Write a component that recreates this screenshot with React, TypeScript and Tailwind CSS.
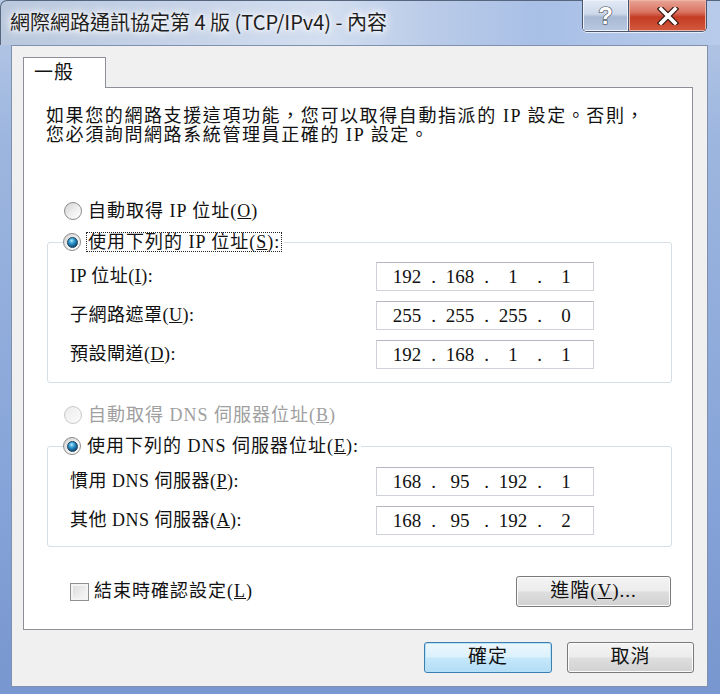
import React from "react";

function Radio({ checked = false, disabled = false }: { checked?: boolean; disabled?: boolean }) {
  return (
    <span
      className={
        disabled
          ? "relative flex w-[18px] h-[18px] shrink-0 items-center justify-center rounded-full border border-[#c9c9c9] bg-[linear-gradient(135deg,#ececec,#fbfbfb)]"
          : "relative flex w-[18px] h-[18px] shrink-0 items-center justify-center rounded-full border border-[#8b8b8b] bg-[linear-gradient(135deg,#d2d2d2_0%,#f0f0f0_55%,#ffffff_100%)]"
      }
    >
      {checked && (
        <span className="block w-[11px] h-[11px] rounded-full border border-[#163f5e] bg-[radial-gradient(circle_at_40%_30%,#b8ecff_0%,#3aa3d6_30%,#145f93_65%,#0a3252_100%)]" />
      )}
    </span>
  );
}

function IpBox({ parts }: { parts: string[] }) {
  return (
    <div className="flex h-[29px] w-[218px] items-center border border-[#cfd2d8] border-t-[#b4b7bf] bg-white pl-[8px] font-['Liberation_Serif',serif] text-[19px] leading-none text-[#111]">
      {parts.map((p, i) => (
        <React.Fragment key={i}>
          <span className="w-[44px] text-center">{p}</span>
          {i < 3 && <span className="w-[9px] text-center">.</span>}
        </React.Fragment>
      ))}
    </div>
  );
}

function Row({ label, parts }: { label: React.ReactNode; parts: string[] }) {
  return (
    <div className="grid grid-cols-[306px_218px] items-center">
      <span className="tracking-[0.5px]">{label}</span>
      <IpBox parts={parts} />
    </div>
  );
}

function Btn({ children, className = "", primary = false }: { children: React.ReactNode; className?: string; primary?: boolean }) {
  return (
    <div
      className={
        (primary
          ? "border-[#3c7fb1] bg-[linear-gradient(#ecf7fd_0%,#dcf1fc_48%,#c6e8fb_52%,#b2ddf6_100%)] shadow-[inset_0_0_0_1px_#b8e0f6] "
          : "border-[#7a7a7a] bg-[linear-gradient(#f4f4f4_0%,#ececec_48%,#dedede_52%,#d1d1d1_100%)] shadow-[inset_0_0_0_1px_#fbfbfb] ") +
        "flex h-[31px] items-center justify-center rounded-[3px] border text-[19px] tracking-[1px] text-[#111] " +
        className
      }
    >
      {children}
    </div>
  );
}

export default function App() {
  return (
    <div className="w-[720px] h-[694px] overflow-hidden bg-[linear-gradient(180deg,#b7c9e6_0%,#9db6df_20%,#86a4d8_70%,#7896cf_100%)] font-['Liberation_Serif','Noto_Sans_CJK_TC',serif] text-[18px] text-[#111]">
      {/* Title bar */}
      <div className="relative flex h-[45px] items-start bg-[linear-gradient(90deg,#bac8dd_0%,#c6d3e8_25%,#d3def0_45%,#b9cbe8_60%,#a8bfe6_75%,#b8cbea_100%)] border-l border-t border-[#56667f] rounded-tl-[7px]">
        <div className="pl-[9px] pt-[7px] font-['Noto_Sans_CJK_TC',sans-serif] text-[20px] leading-[28px] text-[#1e1e1e] [text-shadow:0_0_8px_#ffffff,0_0_12px_#ffffff,0_0_4px_#ffffff]">
          網際網路通訊協定第 4 版 (TCP/IPv4) - 內容
        </div>
        <div className="ml-auto mr-[13px] flex h-[32px] -mt-px overflow-hidden rounded-b-[5px] border border-t-0 border-[#4a5670] shadow-[0_1px_0_#e6eef9]">
          <div className="flex w-[46px] items-center justify-center border-r border-[#4a5670] bg-[linear-gradient(#e3eaf5_0%,#ccd8ea_45%,#a8b9d4_55%,#b9c9e2_100%)] shadow-[inset_0_0_0_1px_#eef3fa]">
            <span className="font-['Liberation_Sans',sans-serif] text-[24px] font-bold leading-none text-white [-webkit-text-stroke:1.2px_#3a3f48] [paint-order:stroke_fill]">?</span>
          </div>
          <div className="flex w-[77px] items-center justify-center bg-[linear-gradient(#e8a596_0%,#d9715f_40%,#c43c24_55%,#d25a3e_100%)] shadow-[inset_0_0_0_1px_#efb3a6]">
            <svg width="22" height="18" viewBox="0 0 22 18">
              <path d="M4 2 L18 16 M18 2 L4 16" stroke="#3b1a14" strokeWidth="6" strokeLinecap="square" fill="none" />
              <path d="M4 2 L18 16 M18 2 L4 16" stroke="#ffffff" strokeWidth="3.6" strokeLinecap="square" fill="none" />
            </svg>
          </div>
        </div>
      </div>

      {/* Client */}
      <div className="ml-[11px] mr-[12px] h-[642px] border border-[#7f91ad] bg-[#f0f0f0] pl-[11px] pr-[13px] pt-[11px]">
        <div className="ml-0 mr-[1px] flex flex-col">
          {/* Tab */}
          <div className="relative z-10 -mb-px flex h-[31px] w-[83px] items-center border border-b-0 border-[#8c8f96] bg-white pl-[10px] text-[19px] tracking-[1px]">
            一般
          </div>
          {/* Panel */}
          <div className="flex h-[543px] flex-col border border-[#8c8f96] bg-white">
            <p className="mt-[19px] pl-[22px] text-[18px] leading-[19px] tracking-[1.6px]">
              如果您的網路支援這項功能，您可以取得自動指派的 IP 設定。否則，
              <br />
              您必須詢問網路系統管理員正確的 IP 設定。
            </p>

            <div className="mt-[56px] flex h-[20px] items-center pl-[40px]">
              <Radio />
              <span className="ml-[6px] tracking-[1px]">
                自動取得 IP 位址(<u>O</u>)
              </span>
            </div>

            <fieldset className="ml-[23px] mr-[20px] mt-[11px] rounded-[3px] border border-[#d5dfe5] p-0">
              <legend className="ml-[15px] flex h-[20px] items-center pr-[2px]">
                <Radio checked />
                <span className="ml-[5px] border border-dotted border-[#222] px-[1px] leading-[18px] tracking-[1px]">
                  使用下列的 IP 位址(<u>S</u>):
                </span>
              </legend>
              <div className="flex flex-col gap-[10px] pl-[22px] pb-[13px] pt-[10px]">
                <Row label={<>IP 位址(<u>I</u>):</>} parts={["192", "168", "1", "1"]} />
                <Row label={<>子網路遮罩(<u>U</u>):</>} parts={["255", "255", "255", "0"]} />
                <Row label={<>預設閘道(<u>D</u>):</>} parts={["192", "168", "1", "1"]} />
              </div>
            </fieldset>

            <div className="mt-[22px] flex h-[20px] items-center pl-[40px] text-[#a0a0a0]">
              <Radio disabled />
              <span className="ml-[6px] tracking-[1px]">
                自動取得 DNS 伺服器位址(<u>B</u>)
              </span>
            </div>

            <fieldset className="ml-[23px] mr-[20px] mt-[11px] rounded-[3px] border border-[#d5dfe5] p-0">
              <legend className="ml-[15px] flex h-[20px] items-center pr-[2px]">
                <Radio checked />
                <span className="ml-[6px] tracking-[1px]">
                  使用下列的 DNS 伺服器位址(<u>E</u>):
                </span>
              </legend>
              <div className="flex flex-col gap-[10px] pl-[22px] pb-[11px] pt-[11px]">
                <Row label={<>慣用 DNS 伺服器(<u>P</u>):</>} parts={["168", "95", "192", "1"]} />
                <Row label={<>其他 DNS 伺服器(<u>A</u>):</>} parts={["168", "95", "192", "2"]} />
              </div>
            </fieldset>

            <div className="mt-[29px] flex items-center pl-[46px] pr-[21px]">
              <span className="block h-[18px] w-[19px] border border-[#8e8f8f] bg-[linear-gradient(135deg,#d9d9d9_0%,#eeeeee_60%,#f8f8f8_100%)] shadow-[inset_0_0_0_2px_#f4f4f4]" />
              <span className="ml-[5px] tracking-[1px]">
                結束時確認設定(<u>L</u>)
              </span>
              <Btn className="ml-auto w-[155px]">
                進階(<u>V</u>)...
              </Btn>
            </div>
          </div>
        </div>

        {/* Bottom buttons */}
        <div className="mt-[12px] flex justify-end gap-[15px]">
          <Btn primary className="w-[128px]">確定</Btn>
          <Btn className="w-[127px]">取消</Btn>
        </div>
      </div>
    </div>
  );
}
